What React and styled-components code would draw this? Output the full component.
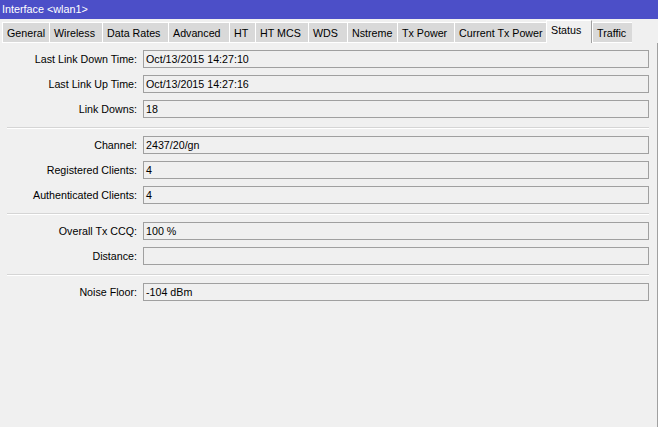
import React from "react";
import styled, { createGlobalStyle } from "styled-components";

const GlobalStyle = createGlobalStyle`
  body {
    margin: 0;
    background-color: #f0f0f0;
    font-family: "Liberation Sans", Arial, sans-serif;
    font-size: 10.7px;
    color: #000000;
  }
`;

const Window = styled.div`
  width: 658px;
  height: 427px;
  display: flex;
  flex-direction: column;
  background-color: #f0f0f0;
  overflow: hidden;
`;

const TitleBar = styled.div`
  height: 19px;
  line-height: 19px;
  padding-left: 2px;
  background-color: #4c4fc8;
  color: #ffffff;
  font-size: 10.8px;
`;

const TabStrip = styled.div`
  height: 24px;
  display: flex;
  align-items: flex-start;
  padding-left: 2px;
  padding-top: 1px;
  box-sizing: border-box;
`;

const Tab = styled.div`
  box-sizing: border-box;
  width: ${(p) => `${p.width}px`};
  height: ${(p) => (p.active ? "23px" : "21px")};
  margin-top: ${(p) => (p.active ? "0" : "2px")};
  padding-left: 4px;
  line-height: ${(p) => (p.active ? "18px" : "20px")};
  background-color: ${(p) => (p.active ? "#f0f0f0" : "#d9d9d9")};
  border-top: 1px solid #ffffff;
  border-left: 1px solid #ffffff;
  border-right: ${(p) => (p.active ? "1px solid #a0a0a0" : "none")};
  border-bottom: ${(p) => (p.active ? "none" : "1px solid #ffffff")};
  white-space: nowrap;
  overflow: hidden;
`;

const Body = styled.div`
  flex: 1;
  box-sizing: border-box;
  width: 658px;
  padding: 7px 8px 0 0;
  border-right: 1px solid #a0a0a0;
`;

const Group = styled.div`
  display: grid;
  grid-template-columns: 137px 1fr;
  column-gap: 6px;
  row-gap: 7px;
`;

const Label = styled.div`
  height: 18px;
  line-height: 18px;
  text-align: right;
  white-space: nowrap;
`;

const Field = styled.div`
  box-sizing: border-box;
  height: 18px;
  line-height: 16px;
  padding-left: 2px;
  border: 1px solid #a0a0a0;
  background-color: #f0f0f0;
  white-space: nowrap;
`;

const Separator = styled.div`
  margin: 9px 0 7px 7px;
  height: 1px;
  background-color: #d5d5d5;
  border-bottom: 1px solid #ffffff;
`;

const tabs = [
  { name: "General", width: 47 },
  { name: "Wireless", width: 53 },
  { name: "Data Rates", width: 66 },
  { name: "Advanced", width: 61 },
  { name: "HT", width: 26 },
  { name: "HT MCS", width: 53 },
  { name: "WDS", width: 39 },
  { name: "Nstreme", width: 50 },
  { name: "Tx Power", width: 57 },
  { name: "Current Tx Power", width: 92 },
  { name: "Status", width: 46, active: true },
  { name: "Traffic", width: 40 },
];

const groups = [
  [
    ["Last Link Down Time:", "Oct/13/2015 14:27:10"],
    ["Last Link Up Time:", "Oct/13/2015 14:27:16"],
    ["Link Downs:", "18"],
  ],
  [
    ["Channel:", "2437/20/gn"],
    ["Registered Clients:", "4"],
    ["Authenticated Clients:", "4"],
  ],
  [
    ["Overall Tx CCQ:", "100 %"],
    ["Distance:", ""],
  ],
  [["Noise Floor:", "-104 dBm"]],
];

const App = () => {
  return (
    <Window>
      <GlobalStyle />
      <TitleBar>Interface &lt;wlan1&gt;</TitleBar>
      <TabStrip>
        {tabs.map((t) => (
          <Tab key={t.name} width={t.width} active={t.active}>
            {t.name}
          </Tab>
        ))}
      </TabStrip>
      <Body>
        {groups.map((rows, i) => (
          <React.Fragment key={i}>
            {i > 0 && <Separator />}
            <Group>
              {rows.map(([label, value]) => (
                <React.Fragment key={label}>
                  <Label>{label}</Label>
                  <Field>{value}</Field>
                </React.Fragment>
              ))}
            </Group>
          </React.Fragment>
        ))}
      </Body>
    </Window>
  );
};

export default App;
